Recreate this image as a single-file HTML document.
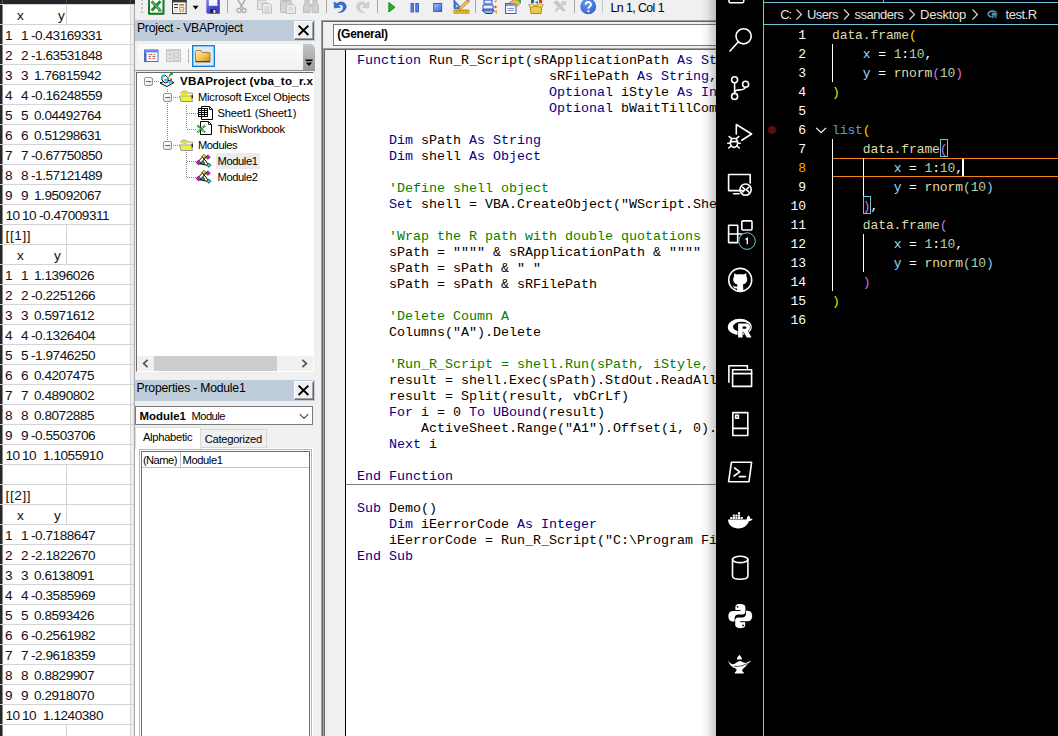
<!DOCTYPE html>
<html><head><meta charset="utf-8"><title>screen</title>
<style>
html,body{margin:0;padding:0;}
html{overflow:hidden;width:1058px;height:736px;}
body{width:1058px;height:736px;position:relative;overflow:hidden;background:#f0f0f0;font-family:"Liberation Sans",sans-serif;}
.abs{position:absolute;}
div,span{box-sizing:border-box;}
/* excel */
#xl{position:absolute;left:0;top:0;width:135px;height:736px;background:#fff;overflow:hidden;}
.hl{position:absolute;left:0;width:134px;height:1px;background:#d4d4d4;z-index:2;}
.vl{position:absolute;top:0;width:1px;background:#d4d4d4;}
.ct{position:absolute;font-size:13.6px;line-height:20px;height:20px;color:#111;white-space:pre;letter-spacing:-0.47px;}
/* vba */
.tah{font-family:"Liberation Sans",sans-serif;font-size:11px;color:#000;white-space:pre;}
.code{position:absolute;font-family:"Liberation Mono",monospace;font-size:13.333px;line-height:16px;height:16px;white-space:pre;color:#000;left:357px;}
.k{color:#00008b;}
.c{color:#008000;}
/* vscode */
#vs{position:absolute;left:716px;top:0;width:342px;height:736px;background:#000;overflow:hidden;}
.ln{position:absolute;left:0;width:90px;text-align:right;font-family:"Liberation Mono",monospace;font-size:13px;line-height:19px;height:19px;color:#fff;letter-spacing:-0.1px;}
.vc{position:absolute;left:116px;font-family:"Liberation Mono",monospace;font-size:13px;line-height:19px;height:19px;color:#fff;white-space:pre;letter-spacing:-0.1px;}
.f{color:#dcdcaa;}.v{color:#9cdcfe;}.n{color:#b5cea8;}.b1{color:#ffd700;}.b2{color:#da70d6;}.b3{color:#87cefa;}.kw{color:#569cd6;}
</style></head><body>

<div id="xl">
<div class="hl" style="top:4px"></div>
<div class="hl" style="top:24px"></div>
<div class="hl" style="top:44px"></div>
<div class="hl" style="top:64px"></div>
<div class="hl" style="top:84px"></div>
<div class="hl" style="top:104px"></div>
<div class="hl" style="top:124px"></div>
<div class="hl" style="top:144px"></div>
<div class="hl" style="top:164px"></div>
<div class="hl" style="top:184px"></div>
<div class="hl" style="top:204px"></div>
<div class="hl" style="top:224px"></div>
<div class="hl" style="top:244px"></div>
<div class="hl" style="top:264px"></div>
<div class="hl" style="top:284px"></div>
<div class="hl" style="top:304px"></div>
<div class="hl" style="top:324px"></div>
<div class="hl" style="top:344px"></div>
<div class="hl" style="top:364px"></div>
<div class="hl" style="top:384px"></div>
<div class="hl" style="top:404px"></div>
<div class="hl" style="top:424px"></div>
<div class="hl" style="top:444px"></div>
<div class="hl" style="top:464px"></div>
<div class="hl" style="top:484px"></div>
<div class="hl" style="top:504px"></div>
<div class="hl" style="top:524px"></div>
<div class="hl" style="top:544px"></div>
<div class="hl" style="top:564px"></div>
<div class="hl" style="top:584px"></div>
<div class="hl" style="top:604px"></div>
<div class="hl" style="top:624px"></div>
<div class="hl" style="top:644px"></div>
<div class="hl" style="top:664px"></div>
<div class="hl" style="top:684px"></div>
<div class="hl" style="top:704px"></div>
<div class="hl" style="top:724px"></div>
<div class="hl" style="top:744px"></div>
<div class="vl" style="left:66px;top:4px;height:20px"></div>
<div class="vl" style="left:66px;top:224px;height:40px"></div>
<div class="vl" style="left:66px;top:464px;height:60px"></div>
<div class="vl" style="left:66px;top:724px;height:12px"></div>
<div class="vl" style="left:130px;top:0;height:736px;background:#d4d4d4"></div>
<span class="ct" style="left:17px;top:6px;">x</span>
<span class="ct" style="left:58px;top:6px;">y</span>
<span class="ct" style="left:5px;top:26px;">1</span>
<span class="ct" style="left:21px;top:26px;">1</span>
<span class="ct" style="left:31px;top:26px;">-0.43169331</span>
<span class="ct" style="left:5px;top:46px;">2</span>
<span class="ct" style="left:21px;top:46px;">2</span>
<span class="ct" style="left:31px;top:46px;">-1.63531848</span>
<span class="ct" style="left:5px;top:66px;">3</span>
<span class="ct" style="left:21px;top:66px;">3</span>
<span class="ct" style="left:34px;top:66px;">1.76815942</span>
<span class="ct" style="left:5px;top:86px;">4</span>
<span class="ct" style="left:21px;top:86px;">4</span>
<span class="ct" style="left:31px;top:86px;">-0.16248559</span>
<span class="ct" style="left:5px;top:106px;">5</span>
<span class="ct" style="left:21px;top:106px;">5</span>
<span class="ct" style="left:34px;top:106px;">0.04492764</span>
<span class="ct" style="left:5px;top:126px;">6</span>
<span class="ct" style="left:21px;top:126px;">6</span>
<span class="ct" style="left:34px;top:126px;">0.51298631</span>
<span class="ct" style="left:5px;top:146px;">7</span>
<span class="ct" style="left:21px;top:146px;">7</span>
<span class="ct" style="left:31px;top:146px;">-0.67750850</span>
<span class="ct" style="left:5px;top:166px;">8</span>
<span class="ct" style="left:21px;top:166px;">8</span>
<span class="ct" style="left:31px;top:166px;">-1.57121489</span>
<span class="ct" style="left:5px;top:186px;">9</span>
<span class="ct" style="left:21px;top:186px;">9</span>
<span class="ct" style="left:34px;top:186px;">1.95092067</span>
<span class="ct" style="left:5.5px;top:206px;">10</span>
<span class="ct" style="left:22px;top:206px;">10</span>
<span class="ct" style="left:39px;top:206px;">-0.47009311</span>
<span class="ct" style="left:5.5px;top:226px;letter-spacing:0.6px">[[1]]</span>
<span class="ct" style="left:17px;top:246px;">x</span>
<span class="ct" style="left:54px;top:246px;">y</span>
<span class="ct" style="left:5px;top:266px;">1</span>
<span class="ct" style="left:21px;top:266px;">1</span>
<span class="ct" style="left:34px;top:266px;">1.1396026</span>
<span class="ct" style="left:5px;top:286px;">2</span>
<span class="ct" style="left:21px;top:286px;">2</span>
<span class="ct" style="left:31px;top:286px;">-0.2251266</span>
<span class="ct" style="left:5px;top:306px;">3</span>
<span class="ct" style="left:21px;top:306px;">3</span>
<span class="ct" style="left:34px;top:306px;">0.5971612</span>
<span class="ct" style="left:5px;top:326px;">4</span>
<span class="ct" style="left:21px;top:326px;">4</span>
<span class="ct" style="left:31px;top:326px;">-0.1326404</span>
<span class="ct" style="left:5px;top:346px;">5</span>
<span class="ct" style="left:21px;top:346px;">5</span>
<span class="ct" style="left:31px;top:346px;">-1.9746250</span>
<span class="ct" style="left:5px;top:366px;">6</span>
<span class="ct" style="left:21px;top:366px;">6</span>
<span class="ct" style="left:34px;top:366px;">0.4207475</span>
<span class="ct" style="left:5px;top:386px;">7</span>
<span class="ct" style="left:21px;top:386px;">7</span>
<span class="ct" style="left:34px;top:386px;">0.4890802</span>
<span class="ct" style="left:5px;top:406px;">8</span>
<span class="ct" style="left:21px;top:406px;">8</span>
<span class="ct" style="left:34px;top:406px;">0.8072885</span>
<span class="ct" style="left:5px;top:426px;">9</span>
<span class="ct" style="left:21px;top:426px;">9</span>
<span class="ct" style="left:31px;top:426px;">-0.5503706</span>
<span class="ct" style="left:5.5px;top:446px;">10</span>
<span class="ct" style="left:22px;top:446px;">10</span>
<span class="ct" style="left:43px;top:446px;">1.1055910</span>
<span class="ct" style="left:5.5px;top:486px;letter-spacing:0.6px">[[2]]</span>
<span class="ct" style="left:17px;top:506px;">x</span>
<span class="ct" style="left:54px;top:506px;">y</span>
<span class="ct" style="left:5px;top:526px;">1</span>
<span class="ct" style="left:21px;top:526px;">1</span>
<span class="ct" style="left:31px;top:526px;">-0.7188647</span>
<span class="ct" style="left:5px;top:546px;">2</span>
<span class="ct" style="left:21px;top:546px;">2</span>
<span class="ct" style="left:31px;top:546px;">-2.1822670</span>
<span class="ct" style="left:5px;top:566px;">3</span>
<span class="ct" style="left:21px;top:566px;">3</span>
<span class="ct" style="left:34px;top:566px;">0.6138091</span>
<span class="ct" style="left:5px;top:586px;">4</span>
<span class="ct" style="left:21px;top:586px;">4</span>
<span class="ct" style="left:31px;top:586px;">-0.3585969</span>
<span class="ct" style="left:5px;top:606px;">5</span>
<span class="ct" style="left:21px;top:606px;">5</span>
<span class="ct" style="left:34px;top:606px;">0.8593426</span>
<span class="ct" style="left:5px;top:626px;">6</span>
<span class="ct" style="left:21px;top:626px;">6</span>
<span class="ct" style="left:31px;top:626px;">-0.2561982</span>
<span class="ct" style="left:5px;top:646px;">7</span>
<span class="ct" style="left:21px;top:646px;">7</span>
<span class="ct" style="left:31px;top:646px;">-2.9618359</span>
<span class="ct" style="left:5px;top:666px;">8</span>
<span class="ct" style="left:21px;top:666px;">8</span>
<span class="ct" style="left:34px;top:666px;">0.8829907</span>
<span class="ct" style="left:5px;top:686px;">9</span>
<span class="ct" style="left:21px;top:686px;">9</span>
<span class="ct" style="left:34px;top:686px;">0.2918070</span>
<span class="ct" style="left:5.5px;top:706px;">10</span>
<span class="ct" style="left:22px;top:706px;">10</span>
<span class="ct" style="left:43px;top:706px;">1.1240380</span>
<div class="abs" style="left:131px;top:4px;width:3px;height:732px;background:linear-gradient(to right,#f6f6f6,#e4e4e4)"></div>
<div class="abs" style="left:134px;top:4px;width:1px;height:732px;background:#a8a8a8"></div>
<div class="abs" style="left:0;top:0;width:135px;height:4px;background:#262626"></div>
<div class="abs" style="left:130px;top:0;width:1px;height:4px;background:#4a4a4a"></div>
<div class="abs" style="left:0;top:0;width:3px;height:736px;background:linear-gradient(to right,#262626 0,#262626 2px,#8a8a8a 2px,#8a8a8a 3px)"></div>
<div class="abs" style="left:66px;top:0;width:1px;height:4px;background:#4a4a4a"></div>
<div class="abs" style="left:2px;top:0;width:1px;height:4px;background:#555"></div>
</div>
<div class="abs" style="left:135px;top:0;width:581px;height:20px;background:#f0f0f0"></div>
<div class="abs" style="left:135px;top:20px;width:180px;height:21px;background:#bfcddb"></div>
<span class="abs" style="left:137px;top:20px;font-family:'Liberation Sans';font-size:12.2px;line-height:17px;color:#000;white-space:pre;letter-spacing:-0.260px;">Project - VBAProject</span>
<div class="abs" style="left:294px;top:21px;width:20px;height:19px;background:#f0f0f0;border:1px solid;border-color:#fff #696969 #696969 #fff;box-shadow:inset -1px -1px 0 #a0a0a0"></div>
<svg class="abs" style="left:294px;top:21px" width="20" height="19"><path d="M4.6 4.6 L14.4 14 M14.4 4.6 L4.6 14" stroke="#000" stroke-width="2" fill="none"/></svg>
<div class="abs" style="left:137px;top:44px;width:178px;height:26px;background:linear-gradient(to bottom,#fbfbfb,#f1f1f1);border-radius:4px 5px 0 0"></div>
<div class="abs" style="left:135px;top:70px;width:180px;height:1px;background:#8c8c8c"></div>
<div class="abs" style="left:136px;top:72px;width:178px;height:300px;background:#fff;border:1px solid #696969;border-right-color:#fff;border-bottom-color:#fff"></div>
<span class="abs" style="left:180px;top:73px;font-family:'Liberation Sans';font-size:11.6px;line-height:16px;color:#000;white-space:pre;letter-spacing:0.223px;font-weight:bold;">VBAProject (vba_to_r.x</span>
<span class="abs" style="left:198px;top:89px;font-family:'Liberation Sans';font-size:11.2px;line-height:16px;color:#000;white-space:pre;letter-spacing:-0.227px;">Microsoft Excel Objects</span>
<span class="abs" style="left:217.5px;top:105px;font-family:'Liberation Sans';font-size:11.2px;line-height:16px;color:#000;white-space:pre;letter-spacing:-0.185px;">Sheet1 (Sheet1)</span>
<span class="abs" style="left:217.5px;top:121px;font-family:'Liberation Sans';font-size:11.2px;line-height:16px;color:#000;white-space:pre;letter-spacing:-0.340px;">ThisWorkbook</span>
<span class="abs" style="left:198px;top:137px;font-family:'Liberation Sans';font-size:11.2px;line-height:16px;color:#000;white-space:pre;letter-spacing:-0.462px;">Modules</span>
<div class="abs" style="left:216px;top:153px;width:44px;height:16px;background:#ebebeb"></div>
<span class="abs" style="left:217.5px;top:153px;font-family:'Liberation Sans';font-size:11.2px;line-height:16px;color:#000;white-space:pre;letter-spacing:-0.409px;">Module1</span>
<span class="abs" style="left:217.5px;top:169px;font-family:'Liberation Sans';font-size:11.2px;line-height:16px;color:#000;white-space:pre;letter-spacing:-0.409px;">Module2</span>
<div class="abs" style="left:137px;top:356px;width:176px;height:15px;background:#f0f0f0"></div>
<div class="abs" style="left:154px;top:356px;width:123px;height:15px;background:#cdcdcd"></div>
<svg class="abs" style="left:137px;top:355px" width="176" height="17"><path d="M10.6 4.8 L6.6 8.5 L10.6 12.2 M165.4 4.8 L169.4 8.5 L165.4 12.2" stroke="#5a5a5a" stroke-width="1.8" fill="none"/></svg>
<div class="abs" style="left:135px;top:380px;width:180px;height:21px;background:#bfcddb"></div>
<span class="abs" style="left:136.6px;top:380px;font-family:'Liberation Sans';font-size:12.2px;line-height:17px;color:#000;white-space:pre;letter-spacing:-0.212px;">Properties - Module1</span>
<div class="abs" style="left:294px;top:381px;width:20px;height:19px;background:#f0f0f0;border:1px solid;border-color:#fff #696969 #696969 #fff;box-shadow:inset -1px -1px 0 #a0a0a0"></div>
<svg class="abs" style="left:294px;top:381px" width="20" height="19"><path d="M4.6 4.6 L14.4 14 M14.4 4.6 L4.6 14" stroke="#000" stroke-width="2" fill="none"/></svg>
<div class="abs" style="left:135px;top:448px;width:178px;height:288px;background:#fff"></div>
<div class="abs" style="left:135px;top:406px;width:178px;height:19px;background:#fff;border:1px solid #7a7a7a"></div>
<span class="abs" style="left:139.5px;top:408px;font-family:'Liberation Sans';font-size:11.4px;line-height:16px;color:#000;white-space:pre;letter-spacing:0.038px;font-weight:bold;">Module1</span>
<span class="abs" style="left:191.4px;top:408px;font-family:'Liberation Sans';font-size:11.2px;line-height:16px;color:#000;white-space:pre;letter-spacing:-0.523px;">Module</span>
<svg class="abs" style="left:298px;top:411px" width="12" height="10"><path d="M1.8 3.2 L6 7.4 L10.2 3.2" stroke="#444" stroke-width="1.1" fill="none"/></svg>
<div class="abs" style="left:135px;top:427px;width:66px;height:22px;background:#fff;border:1px solid #dcdcdc;border-bottom:none"></div>
<div class="abs" style="left:200px;top:429px;width:67px;height:19px;background:#f0f0f0;border:1px solid #d9d9d9"></div>
<span class="abs" style="left:142.9px;top:429px;font-family:'Liberation Sans';font-size:11.2px;line-height:16px;color:#000;white-space:pre;letter-spacing:-0.280px;">Alphabetic</span>
<span class="abs" style="left:204.7px;top:431px;font-family:'Liberation Sans';font-size:11.2px;line-height:16px;color:#000;white-space:pre;letter-spacing:-0.281px;">Categorized</span>
<div class="abs" style="left:139px;top:449px;width:173px;height:290px;border:1px solid #b4b4b4;background:#fff"></div>
<div class="abs" style="left:141px;top:451px;width:169px;height:290px;border:1px solid #696969;background:#fff"></div>
<div class="abs" style="left:142px;top:467px;width:167px;height:1px;background:#c0c0c0"></div>
<div class="abs" style="left:180px;top:452px;width:1px;height:15px;background:#c0c0c0"></div>
<span class="abs" style="left:142.9px;top:452px;font-family:'Liberation Sans';font-size:11.2px;line-height:16px;color:#000;white-space:pre;letter-spacing:-0.556px;">(Name)</span>
<span class="abs" style="left:182.5px;top:452px;font-family:'Liberation Sans';font-size:11.2px;line-height:16px;color:#000;white-space:pre;letter-spacing:-0.409px;">Module1</span>
<div class="abs" style="left:313px;top:402px;width:8px;height:334px;background:#f0f0f0"></div>
<div class="abs" style="left:315px;top:20px;width:6px;height:716px;background:#f0f0f0"></div>
<div class="abs" style="left:321px;top:20px;width:395px;height:716px;background:#f0f0f0;border-left:1px solid #a0a0a0;border-top:1px solid #a0a0a0"></div>
<div class="abs" style="left:322px;top:21px;width:394px;height:715px;border-left:1px solid #696969;border-top:1px solid #696969"></div>
<div class="abs" style="left:333px;top:24px;width:390px;height:22px;background:#fff;border:1px solid #7a7a7a"></div>
<span class="abs" style="left:337.3px;top:27px;font-family:'Liberation Sans';font-size:12px;line-height:15px;color:#000;white-space:pre;letter-spacing:-0.243px;font-weight:bold;">(General)</span>
<div class="abs" style="left:323px;top:48px;width:393px;height:688px;background:#fff;border-left:1px solid #a0a0a0;border-top:1px solid #a0a0a0"></div>
<div class="abs" style="left:324px;top:49px;width:392px;height:687px;border-left:1px solid #696969;border-top:1px solid #696969"></div>
<div class="abs" style="left:325px;top:50px;width:20px;height:686px;background:#f0f0f0"></div>
<div class="abs" style="left:345px;top:50px;width:1px;height:686px;background:#000"></div>
<div class="abs" style="left:346px;top:484px;width:370px;height:1px;background:#808080"></div>
<div class="code" style="top:53px"><span class="k">Function</span> Run_R_Script(sRApplicationPath <span class="k">As</span> <span class="k">String</span>,</div>
<div class="code" style="top:69px">                        sRFilePath <span class="k">As</span> <span class="k">String</span>,</div>
<div class="code" style="top:85px">                        <span class="k">Optional</span> iStyle <span class="k">As</span> <span class="k">Integer</span> = 1,</div>
<div class="code" style="top:101px">                        <span class="k">Optional</span> bWaitTillComplete <span class="k">As</span> <span class="k">Boolean</span></div>
<div class="code" style="top:133px">    <span class="k">Dim</span> sPath <span class="k">As</span> <span class="k">String</span></div>
<div class="code" style="top:149px">    <span class="k">Dim</span> shell <span class="k">As</span> <span class="k">Object</span></div>
<div class="code" style="top:181px">    <span class="c">'Define shell object</span></div>
<div class="code" style="top:197px">    <span class="k">Set</span> shell = VBA.CreateObject("WScript.Shell")</div>
<div class="code" style="top:229px">    <span class="c">'Wrap the R path with double quotations</span></div>
<div class="code" style="top:245px">    sPath = """" &amp; sRApplicationPath &amp; """"</div>
<div class="code" style="top:261px">    sPath = sPath &amp; " "</div>
<div class="code" style="top:277px">    sPath = sPath &amp; sRFilePath</div>
<div class="code" style="top:309px">    <span class="c">'Delete Coumn A</span></div>
<div class="code" style="top:325px">    Columns("A").Delete</div>
<div class="code" style="top:357px">    <span class="c">'Run_R_Script = shell.Run(sPath, iStyle, bWaitTillComplete)</span></div>
<div class="code" style="top:373px">    result = shell.Exec(sPath).StdOut.ReadAll()</div>
<div class="code" style="top:389px">    result = Split(result, vbCrLf)</div>
<div class="code" style="top:405px">    <span class="k">For</span> i = 0 <span class="k">To</span> <span class="k">UBound</span>(result)</div>
<div class="code" style="top:421px">        ActiveSheet.Range("A1").Offset(i, 0).Value = result(i)</div>
<div class="code" style="top:437px">    <span class="k">Next</span> i</div>
<div class="code" style="top:469px"><span class="k">End Function</span></div>
<div class="code" style="top:501px"><span class="k">Sub</span> Demo()</div>
<div class="code" style="top:517px">    <span class="k">Dim</span> iEerrorCode <span class="k">As</span> <span class="k">Integer</span></div>
<div class="code" style="top:533px">    iEerrorCode = Run_R_Script("C:\Program Files\R\R-4.1.0\bin\Rscript.exe", _</div>
<div class="code" style="top:549px"><span class="k">End Sub</span></div>
<svg class="abs" style="left:140px;top:0px" width="4" height="14" viewBox="0 0 4 14"><g fill="#c2c2c2"><rect x="1" y="-1" width="2" height="2"/><rect x="1" y="3" width="2" height="2"/><rect x="1" y="7" width="2" height="2"/><rect x="1" y="11" width="2" height="2"/></g></svg>
<svg class="abs" style="left:148px;top:0px" width="17" height="15" viewBox="0 0 17 15"><rect x="0" y="-1" width="16.4" height="15.8" fill="#2a9a3a"/><rect x="1" y="-1" width="14.4" height="14.8" fill="none" stroke="#0a5a1a" stroke-width="2" stroke-dasharray="1 1"/><rect x="2" y="-1" width="12.4" height="13.6" fill="#fff"/><path d="M3.6 1.2 L12.4 10.6 M12.4 1.2 L3.6 10.6" stroke="#1a8a2a" stroke-width="2.8"/><path d="M3.6 1.2 L12.4 10.6" stroke="#cfe8cf" stroke-width="0.7"/><path d="M10 11 H14" stroke="#1a8a2a" stroke-width="1"/></svg>
<svg class="abs" style="left:172px;top:0px" width="15" height="15" viewBox="0 0 15 15"><rect x="0.5" y="-1" width="13.6" height="14.6" fill="#fff" stroke="#3a3a3a" stroke-width="1"/><rect x="0" y="-1" width="14.6" height="3.4" fill="#3a3a3a"/><rect x="1" y="9" width="5.4" height="3.6" fill="#e4e6ee"/><rect x="2" y="4" width="4" height="1.1" fill="#3a3a3a"/><rect x="2" y="7" width="4" height="1.1" fill="#3a3a3a"/><rect x="7.2" y="4" width="5" height="1.8" fill="#d88818"/><rect x="7.7" y="7.3" width="4" height="2.6" fill="#fff" stroke="#d88818" stroke-width="1"/><path d="M7.2 11.6 H9.2 M10.2 11.6 H12.2" stroke="#d88818" stroke-width="1"/></svg>
<svg class="abs" style="left:192px;top:5px" width="8" height="6" viewBox="0 0 8 6"><path d="M0.6 0.7 L6.6 0.7 L3.6 4.4 Z" fill="#000"/></svg>
<svg class="abs" style="left:206px;top:0px" width="15" height="15" viewBox="0 0 15 15"><defs><linearGradient id="svg1" x1="0" y1="0" x2="1" y2="1"><stop offset="0" stop-color="#8484e8"/><stop offset="0.5" stop-color="#4a4ad0"/><stop offset="1" stop-color="#3a3ab0"/></linearGradient></defs><path d="M0.3 -1 H13.8 V13.8 H1.6 L0.3 12.6 Z" fill="url(#svg1)"/><rect x="2.8" y="-1" width="8.6" height="7" fill="#f4f6ff"/><path d="M2.8 5 H11.4 V6 H2.8 Z" fill="#c8d0f0"/><rect x="4.4" y="9.4" width="5.8" height="3.8" fill="#1a1a3a"/><rect x="7.4" y="10" width="2" height="3" fill="#e8e8ff"/></svg>
<div class="abs" style="left:227px;top:0;width:1px;height:13px;background:#a8a8a8"></div>
<div class="abs" style="left:326px;top:0;width:1px;height:13px;background:#a8a8a8"></div>
<div class="abs" style="left:377px;top:0;width:1px;height:13px;background:#a8a8a8"></div>
<div class="abs" style="left:475px;top:0;width:1px;height:13px;background:#a8a8a8"></div>
<div class="abs" style="left:574px;top:0;width:1px;height:13px;background:#a8a8a8"></div>
<div class="abs" style="left:602px;top:0;width:1px;height:13px;background:#c8c8c8"></div>
<svg class="abs" style="left:236px;top:0px" width="11" height="14" viewBox="0 0 11 14"><path d="M2 0 L7 8 M9 0 L4 8" stroke="#b0b0b0" stroke-width="1.6" fill="none"/><circle cx="3" cy="10.5" r="2" fill="none" stroke="#b0b0b0" stroke-width="1.4"/><circle cx="8" cy="10.5" r="2" fill="none" stroke="#b0b0b0" stroke-width="1.4"/></svg>
<svg class="abs" style="left:257px;top:0px" width="16" height="14" viewBox="0 0 16 14"><path d="M0.5 0 H7.5 L9.5 2 V9.5 H0.5 Z" fill="#e4e4e4" stroke="#c0c0c0"/><path d="M5.5 3.5 H12.5 L14.5 5.5 V13 H5.5 Z" fill="#ececec" stroke="#bcbcbc"/><path d="M7.5 7 H12.5 M7.5 9 H12.5 M7.5 11 H12.5" stroke="#c8c8c8"/></svg>
<svg class="abs" style="left:280px;top:0px" width="17" height="14" viewBox="0 0 17 14"><rect x="0.5" y="0.5" width="11" height="12" rx="1" fill="#d4d4d4" stroke="#bcbcbc"/><rect x="3.5" y="0" width="5" height="2.5" fill="#c0c0c0"/><path d="M6.5 4.5 H13.5 L15.5 6.5 V13.5 H6.5 Z" fill="#ececec" stroke="#c0c0c0"/><path d="M8.5 8 H13 M8.5 10 H13" stroke="#c8c8c8"/></svg>
<svg class="abs" style="left:303px;top:0px" width="16" height="14" viewBox="0 0 16 14"><path d="M2 0 H6 V3 L7 5 V12.5 H0.5 V6 L2 3 Z" fill="#cfcfcf" stroke="#bdbdbd"/><path d="M10 0 H14 V3 L15.5 6 V12.5 H9 V5 L10 3 Z" fill="#cfcfcf" stroke="#bdbdbd"/><rect x="6" y="4" width="4" height="3" fill="#c4c4c4"/></svg>
<svg class="abs" style="left:333px;top:0px" width="15" height="14" viewBox="0 0 15 14"><path d="M1 2 L1.5 8 L7.5 7.2 L5.2 5.2 C8 3.5 10.8 5 10.2 8.2 C9.8 10.4 8 11.8 5.5 12.6 C10 12.6 13.2 10 13.2 6.4 C13 2.2 8 0.4 3.6 3.6 Z" fill="#2f6fe0" stroke="#2055b8" stroke-width="0.6"/></svg>
<svg class="abs" style="left:355px;top:0px" width="15" height="14" viewBox="0 0 15 14"><path d="M14 2 L13.5 8 L7.5 7.2 L9.8 5.2 C7 3.5 4.2 5 4.8 8.2 C5.2 10.4 7 11.8 9.5 12.6 C5 12.6 1.8 10 1.8 6.4 C2 2.2 7 0.4 11.4 3.6 Z" fill="#d0d0d0" stroke="#bdbdbd" stroke-width="0.6"/></svg>
<svg class="abs" style="left:388px;top:2px" width="8" height="11" viewBox="0 0 8 11"><path d="M0.8 0.5 L7 5.3 L0.8 10 Z" fill="#22b022" stroke="#0a7a0a" stroke-width="0.8"/></svg>
<svg class="abs" style="left:410px;top:3px" width="10" height="10" viewBox="0 0 10 10"><rect x="1" y="0.5" width="2.6" height="8.5" fill="#5a82e8" stroke="#2a4fc0" stroke-width="0.8"/><rect x="5.8" y="0.5" width="2.6" height="8.5" fill="#5a82e8" stroke="#2a4fc0" stroke-width="0.8"/></svg>
<svg class="abs" style="left:433px;top:3px" width="10" height="10" viewBox="0 0 10 10"><defs><linearGradient id="sg" x1="0" y1="0" x2="1" y2="1"><stop offset="0" stop-color="#a8c0f8"/><stop offset="1" stop-color="#3a62d8"/></linearGradient></defs><rect x="0.7" y="0.5" width="8" height="8" fill="url(#sg)" stroke="#2a4fc0" stroke-width="0.9"/></svg>
<svg class="abs" style="left:453px;top:0px" width="17" height="14" viewBox="0 0 17 14"><path d="M1 0 L1 8.5 L8.5 8.5 Z" fill="#4a7ae0" stroke="#2a55c0" stroke-width="0.8"/><path d="M3 4.5 L3 7 L5.3 7 Z" fill="#cfe0ff"/><path d="M6.5 7.5 L14 0 L16 1.8 L8.5 9 L6 9.8 Z" fill="#f0c060" stroke="#a87818" stroke-width="0.7"/><path d="M13 0 L15 -1 L17 1 L16 2.6 Z" fill="#e07070"/><rect x="1" y="10" width="15" height="3.2" fill="#f0c030" stroke="#b08010" stroke-width="0.8"/><path d="M4 10 V12 M7 10 V12 M10 10 V12 M13 10 V12" stroke="#8a6008" stroke-width="0.6"/></svg>
<svg class="abs" style="left:481px;top:0px" width="18" height="15" viewBox="0 0 18 15"><path d="M3 0 H11 V4 H3 Z" fill="#d8e4ff" stroke="#2a55c0" stroke-width="1"/><path d="M2 5 L12 5 L12 9 L2 9 Z" fill="#e8eeff" stroke="#2a55c0" stroke-width="1"/><path d="M1 10 L13 10 L11 13.5 L5 13.5 Z" fill="#9ab0e8" stroke="#1a3a90" stroke-width="1"/><path d="M13 1 L16 0 L15 3 Z M13 11 L16 10 L16 14 Z" fill="#f0a020"/><path d="M13.5 5.5 L16.5 7 L13.5 8.5 Z" fill="#e04020"/></svg>
<svg class="abs" style="left:505px;top:0px" width="16" height="14" viewBox="0 0 16 14"><rect x="0.5" y="3.5" width="10.5" height="10" fill="#f4f7ff" stroke="#3a5fc0" stroke-width="1"/><rect x="1" y="4" width="9.5" height="2" fill="#7a9ae8"/><path d="M2.5 8.5 H9 M2.5 10.5 H9" stroke="#7a8ac0" stroke-width="0.9"/><path d="M4 3 L9 -0.5 L14 1 L15.5 3 L12 6.5 L11 4 Z" fill="#e8c050" stroke="#a88020" stroke-width="0.7"/><path d="M13 0 L16 0 L16 4 Z" fill="#40a060"/></svg>
<svg class="abs" style="left:528px;top:0px" width="17" height="14" viewBox="0 0 17 14"><path d="M2 6 L14 6 L13 13.5 L3 13.5 Z" fill="#f0c848" stroke="#a88018" stroke-width="0.9"/><path d="M0.5 5 L4 3.5 L8 6 L12 3.5 L15.5 5 L13 7.5 L8 6 L3 7.5 Z" fill="#f8dc78" stroke="#a88018" stroke-width="0.7"/><rect x="3" y="0" width="3" height="3" fill="#3050d0"/><rect x="11" y="0" width="3" height="3" fill="#e03020"/><path d="M7 2.5 L10 0.5 L10 4.5 Z" fill="#30a040"/></svg>
<svg class="abs" style="left:552px;top:0px" width="16" height="14" viewBox="0 0 16 14"><path d="M2 2 L5 1 L13 10 L11.5 11.5 L3.5 4 Z" fill="#c8c8c8" stroke="#b4b4b4" stroke-width="0.6"/><path d="M14 2 L11 1 L9.5 3 L3 10 L4.5 11.5 L11 5 L13.5 4.5 Z" fill="#d4d4d4" stroke="#b4b4b4" stroke-width="0.6"/></svg>
<svg class="abs" style="left:580px;top:0px" width="17" height="16" viewBox="0 0 17 16"><defs><radialGradient id="hg" cx="0.4" cy="0.3" r="0.8"><stop offset="0" stop-color="#6a9af0"/><stop offset="1" stop-color="#2a5acc"/></radialGradient></defs><circle cx="8.2" cy="6.4" r="7.9" fill="url(#hg)"/><path d="M5.6 4.6 C5.6 1.2 11 1.2 11 4.5 C11 6.6 8.4 6.6 8.4 8.8" stroke="#fff" stroke-width="1.9" fill="none"/><rect x="7.4" y="10.2" width="2" height="2" fill="#fff"/></svg>
<span class="abs" style="left:610.4px;top:1px;font-family:'Liberation Sans';font-size:12.4px;line-height:15px;color:#000;white-space:pre;letter-spacing:-0.579px;">Ln 1, Col 1</span>
<svg class="abs" style="left:144px;top:49px" width="15" height="14" viewBox="0 0 15 14"><rect x="0.5" y="1" width="13.5" height="11.5" fill="#fff" stroke="#4a6ac8" stroke-width="1"/><rect x="0.5" y="1" width="13.5" height="2.5" fill="#6a8ae0"/><rect x="0.5" y="3.5" width="2" height="9" fill="#4a6ac8"/><path d="M4.5 5.5 H8 M4.5 9.5 H7" stroke="#f06030" stroke-width="1"/><path d="M9.5 5.5 H11.5 M8.5 9.5 H11.5" stroke="#f06030" stroke-width="1"/><path d="M4.5 7.5 H7 M8.5 7.5 H11.5" stroke="#6a7ab0" stroke-width="1"/></svg>
<svg class="abs" style="left:166px;top:49px" width="16" height="14" viewBox="0 0 16 14"><rect x="0.5" y="0.5" width="14" height="12" fill="#e0e0e0" stroke="#c4c4c4" stroke-width="1"/><rect x="0.5" y="0.5" width="14" height="2" fill="#cfcfcf"/><rect x="7.5" y="4.5" width="5" height="2.5" fill="#ececec" stroke="#c0c0c0" stroke-width="0.8"/><rect x="7.5" y="8.5" width="5" height="2.5" fill="#ececec" stroke="#c0c0c0" stroke-width="0.8"/><path d="M2.5 5.5 H5.5 M2.5 9.5 H5.5" stroke="#c0c0c0" stroke-width="1"/></svg>
<div class="abs" style="left:188px;top:49px;width:1px;height:14px;background:#b4b4b4"></div>
<div class="abs" style="left:192px;top:45px;width:23px;height:22px;background:#dfe9f3;border:1px solid #1080e0;box-shadow:inset 0 0 0 0.5px #4a9ae8"></div>
<svg class="abs" style="left:195px;top:49px" width="16" height="14" viewBox="0 0 16 14"><defs><linearGradient id="fg" x1="0" y1="0" x2="1" y2="1"><stop offset="0" stop-color="#fff0b0"/><stop offset="0.6" stop-color="#f0c048"/><stop offset="1" stop-color="#c88a10"/></linearGradient></defs><path d="M0.5 2.5 Q0.5 1.5 1.5 1.5 H6 L7.5 3.5 H14 Q15 3.5 15 4.5 V12.5 H0.5 Z" fill="url(#fg)" stroke="#8a6a30" stroke-width="0.8"/><path d="M0.5 12.8 H15" stroke="#3a2a10" stroke-width="1"/></svg>
<div class="abs" style="left:303px;top:44px;width:12px;height:26px;border-radius:0 5px 0 0;background:linear-gradient(to bottom,#c4c4c4,#9a9a9a)"></div>
<svg class="abs" style="left:305px;top:59px" width="8" height="8" viewBox="0 0 8 8"><rect x="0.5" y="0.5" width="7" height="1.6" fill="#000"/><path d="M0.8 3.6 H7.2 L4 7 Z" fill="#000"/><path d="M1.5 4.4 H8 L4.8 7.8" fill="#fff" opacity="0.0"/></svg>
<div class="abs" style="left:144px;top:77px;width:9px;height:9px;border:1px solid #919191;border-radius:2px;background:linear-gradient(135deg,#fff 30%,#d8d8d8)"></div>
<div class="abs" style="left:146px;top:81px;width:5px;height:1px;background:#4b63a7"></div>
<div class="abs" style="left:154px;top:81px;width:5px;height:1px;background:repeating-linear-gradient(to right,#8a8a8a 0,#8a8a8a 1px,transparent 1px,transparent 2px)"></div>
<div class="abs" style="left:163px;top:93px;width:9px;height:9px;border:1px solid #919191;border-radius:2px;background:linear-gradient(135deg,#fff 30%,#d8d8d8)"></div>
<div class="abs" style="left:165px;top:97px;width:5px;height:1px;background:#4b63a7"></div>
<div class="abs" style="left:173px;top:97px;width:6px;height:1px;background:repeating-linear-gradient(to right,#8a8a8a 0,#8a8a8a 1px,transparent 1px,transparent 2px)"></div>
<div class="abs" style="left:163px;top:141px;width:9px;height:9px;border:1px solid #919191;border-radius:2px;background:linear-gradient(135deg,#fff 30%,#d8d8d8)"></div>
<div class="abs" style="left:165px;top:145px;width:5px;height:1px;background:#4b63a7"></div>
<div class="abs" style="left:173px;top:145px;width:6px;height:1px;background:repeating-linear-gradient(to right,#8a8a8a 0,#8a8a8a 1px,transparent 1px,transparent 2px)"></div>
<div class="abs" style="left:167px;top:89px;width:1px;height:4px;background:repeating-linear-gradient(to bottom,#8a8a8a 0,#8a8a8a 1px,transparent 1px,transparent 2px)"></div>
<div class="abs" style="left:167px;top:103px;width:1px;height:38px;background:repeating-linear-gradient(to bottom,#8a8a8a 0,#8a8a8a 1px,transparent 1px,transparent 2px)"></div>
<div class="abs" style="left:186px;top:105px;width:1px;height:24px;background:repeating-linear-gradient(to bottom,#8a8a8a 0,#8a8a8a 1px,transparent 1px,transparent 2px)"></div>
<div class="abs" style="left:187px;top:113px;width:11px;height:1px;background:repeating-linear-gradient(to right,#8a8a8a 0,#8a8a8a 1px,transparent 1px,transparent 2px)"></div>
<div class="abs" style="left:187px;top:129px;width:10px;height:1px;background:repeating-linear-gradient(to right,#8a8a8a 0,#8a8a8a 1px,transparent 1px,transparent 2px)"></div>
<div class="abs" style="left:186px;top:152px;width:1px;height:25px;background:repeating-linear-gradient(to bottom,#8a8a8a 0,#8a8a8a 1px,transparent 1px,transparent 2px)"></div>
<div class="abs" style="left:187px;top:161px;width:10px;height:1px;background:repeating-linear-gradient(to right,#8a8a8a 0,#8a8a8a 1px,transparent 1px,transparent 2px)"></div>
<div class="abs" style="left:187px;top:177px;width:10px;height:1px;background:repeating-linear-gradient(to right,#8a8a8a 0,#8a8a8a 1px,transparent 1px,transparent 2px)"></div>
<svg class="abs" style="left:159px;top:73px" width="16" height="15" viewBox="0 0 16 15"><path d="M1 10 L8 13.5 L15 9.5 L9 7 Z" fill="#fff" stroke="#000" stroke-width="1"/><path d="M3 3 L6 2 L9 5 L9 9 L6 10 L3 7 Z" fill="#fff" stroke="#000" stroke-width="0.9"/><path d="M2.5 2 L5.5 1.5 L6 4 L3.5 4.5 Z" fill="#00d8e8"/><path d="M5 6 L8 5.5 L8 8 L5.5 8.5 Z" fill="#30c8e0"/><path d="M9 9.5 L13 8 L13.5 9.5 L10 11 Z" fill="#00d8e8"/><path d="M10 5 L11.5 0.5" stroke="#000" stroke-width="1"/><rect x="11" y="0" width="3" height="2" fill="#00c020"/><rect x="8.5" y="3" width="2.5" height="2" fill="#e8d000"/><rect x="11" y="5.5" width="2" height="2.5" fill="#e020d0"/></svg>
<svg class="abs" style="left:179px;top:90px" width="15" height="13" viewBox="0 0 15 13"><path d="M1.5 4 L3 1.2 L7.5 1.2 L9 3 L13.5 3 L13.5 5" fill="#f4f0c0" stroke="#9a9a9a" stroke-width="0.9"/><rect x="3" y="2.2" width="5" height="2.8" fill="#e8e020"/><path d="M0.5 6 L12 6 L13.5 11.5 L2 11.5 Z" fill="#ecec50" stroke="#8a8a8a" stroke-width="0.9"/><path d="M1.5 6.5 L11.5 6.5 L12.6 11 L2.6 11 Z" fill="#f0f040" opacity="0.8"/><path d="M12 5.5 L14 5 L14 9.5 Z" fill="#222"/></svg>
<svg class="abs" style="left:179px;top:139px" width="15" height="13" viewBox="0 0 15 13"><path d="M1.5 4 L3 1.2 L7.5 1.2 L9 3 L13.5 3 L13.5 5" fill="#f4f0c0" stroke="#9a9a9a" stroke-width="0.9"/><rect x="3" y="2.2" width="5" height="2.8" fill="#e8e020"/><path d="M0.5 6 L12 6 L13.5 11.5 L2 11.5 Z" fill="#ecec50" stroke="#8a8a8a" stroke-width="0.9"/><path d="M1.5 6.5 L11.5 6.5 L12.6 11 L2.6 11 Z" fill="#f0f040" opacity="0.8"/><path d="M12 5.5 L14 5 L14 9.5 Z" fill="#222"/></svg>
<svg class="abs" style="left:198px;top:106px" width="16" height="15" viewBox="0 0 16 15"><path d="M3.5 0.5 H11.5 L14.5 3.5 V13.5 H3.5 Z" fill="#fff" stroke="#000" stroke-width="1"/><path d="M11.5 0.5 V3.5 H14.5" fill="none" stroke="#000" stroke-width="0.8"/><rect x="0.5" y="2.5" width="9" height="8" fill="#fff" stroke="#000" stroke-width="1"/><path d="M0.5 4.5 H9.5 M0.5 6.5 H9.5 M0.5 8.5 H9.5 M3.5 2.5 V10.5 M6.5 2.5 V10.5" stroke="#000" stroke-width="1"/></svg>
<svg class="abs" style="left:197px;top:121px" width="17" height="15" viewBox="0 0 17 15"><path d="M3.5 0.5 H11.5 L14.5 3.5 V13.5 H3.5 Z" fill="#fff" stroke="#000" stroke-width="1"/><path d="M11.5 0.5 V3.5 H14.5" fill="none" stroke="#000" stroke-width="0.8"/><path d="M0.5 4.5 L8 11.5 M8 4.5 L0.5 11.5" stroke="#2a8a2a" stroke-width="2.4" stroke-dasharray="1.2 0.6"/></svg>
<svg class="abs" style="left:196px;top:154px" width="17" height="14" viewBox="0 0 17 14"><path d="M1.5 8 L8 1.5 M2.5 9.5 L13 11.5 M6 2.5 L13 11 M11.5 1.5 L4 10" stroke="#000" stroke-width="1"/><rect x="6.5" y="1" width="3" height="3" fill="#e8d800" stroke="#000" stroke-width="0.5" transform="rotate(45 8 2.5)"/><rect x="10.5" y="1.5" width="3.2" height="3.2" fill="#d818d0" stroke="#000" stroke-width="0.5" transform="rotate(45 12 3)"/><rect x="0.8" y="6.8" width="3.4" height="3.4" fill="#d818d0" stroke="#000" stroke-width="0.5" transform="rotate(45 2.5 8.5)"/><rect x="5.4" y="7.6" width="3" height="3" fill="#10b020" stroke="#000" stroke-width="0.5" transform="rotate(45 7 9)"/><rect x="11.2" y="9.6" width="3.2" height="3.2" fill="#10c8d8" stroke="#000" stroke-width="0.5" transform="rotate(45 12.8 11.2)"/></svg>
<svg class="abs" style="left:196px;top:170px" width="17" height="14" viewBox="0 0 17 14"><path d="M1.5 8 L8 1.5 M2.5 9.5 L13 11.5 M6 2.5 L13 11 M11.5 1.5 L4 10" stroke="#000" stroke-width="1"/><rect x="6.5" y="1" width="3" height="3" fill="#e8d800" stroke="#000" stroke-width="0.5" transform="rotate(45 8 2.5)"/><rect x="10.5" y="1.5" width="3.2" height="3.2" fill="#d818d0" stroke="#000" stroke-width="0.5" transform="rotate(45 12 3)"/><rect x="0.8" y="6.8" width="3.4" height="3.4" fill="#d818d0" stroke="#000" stroke-width="0.5" transform="rotate(45 2.5 8.5)"/><rect x="5.4" y="7.6" width="3" height="3" fill="#10b020" stroke="#000" stroke-width="0.5" transform="rotate(45 7 9)"/><rect x="11.2" y="9.6" width="3.2" height="3.2" fill="#10c8d8" stroke="#000" stroke-width="0.5" transform="rotate(45 12.8 11.2)"/></svg>
<div class="abs" style="left:700px;top:0;width:16px;height:736px;background:linear-gradient(to right,rgba(0,0,0,0),rgba(0,0,0,0.04) 40%,rgba(0,0,0,0.22))"></div>
<div id="vs">
<svg class="abs" style="left:0;top:0" width="47" height="736" viewBox="0 0 47 736"><path d="M13 -6 V1.5 Q13 2.8 14.3 2.8 H26.4 Q27.7 2.8 27.7 1.5 V-6" stroke="#fff" fill="none" stroke-width="1.6" stroke-linejoin="round" stroke-linecap="round" stroke-linecap="butt"/><circle cx="27.6" cy="36.3" r="7.6" stroke="#fff" fill="none" stroke-width="1.6" stroke-linejoin="round" stroke-linecap="round"/><path d="M22.2 42 L14 51" stroke="#fff" fill="none" stroke-width="1.6" stroke-linejoin="round" stroke-linecap="round" stroke-linecap="butt"/><circle cx="18.6" cy="79.7" r="3" stroke="#fff" fill="none" stroke-width="1.6" stroke-linejoin="round" stroke-linecap="round"/><circle cx="29.6" cy="84.2" r="3" stroke="#fff" fill="none" stroke-width="1.6" stroke-linejoin="round" stroke-linecap="round"/><circle cx="18.6" cy="96.4" r="3" stroke="#fff" fill="none" stroke-width="1.6" stroke-linejoin="round" stroke-linecap="round"/><path d="M18.6 82.7 V93.4 M29.3 87.2 C29 90.5 24 89.5 20.5 90.3 C19.2 90.7 18.8 91.5 18.6 93" stroke="#fff" fill="none" stroke-width="1.6" stroke-linejoin="round" stroke-linecap="round"/><path d="M20.3 134 V124.5 L35.6 134 L25.8 140.2" stroke="#fff" fill="none" stroke-width="1.6" stroke-linejoin="round" stroke-linecap="round"/><ellipse cx="18" cy="142.8" rx="3.6" ry="4.6" stroke="#fff" fill="none" stroke-width="1.6" stroke-linejoin="round" stroke-linecap="round"/><path d="M14.4 141.6 H21.6 M15.5 138.4 L13.2 136.6 M20.5 138.4 L22.8 136.6 M14.2 143.2 H11.8 M21.8 143.2 H24.2 M15 146 L12.8 148 M21 146 L23.2 148" stroke="#fff" fill="none" stroke-width="1.6" stroke-linejoin="round" stroke-linecap="round" stroke-width="1.3"/><path d="M27 190.6 H12.6 V174.5 H34.2 V183" stroke="#fff" fill="none" stroke-width="1.6" stroke-linejoin="round" stroke-linecap="round"/><path d="M17.5 193.7 H23" stroke="#fff" fill="none" stroke-width="1.6" stroke-linejoin="round" stroke-linecap="round"/><circle cx="29.6" cy="189.6" r="5.6" stroke="#fff" fill="none" stroke-width="1.6" stroke-linejoin="round" stroke-linecap="round" stroke-width="1.4"/><path d="M26.8 187.3 L29 189.6 L26.8 191.9 M32.6 187.3 L30.4 189.6 L32.6 191.9" stroke="#fff" fill="none" stroke-width="1.6" stroke-linejoin="round" stroke-linecap="round" stroke-width="1.1"/><path d="M12.6 225.2 H21.7 V242.6 H12.6 Z M12.6 234 H21.7 M21.7 234 H26" stroke="#fff" fill="none" stroke-width="1.6" stroke-linejoin="round" stroke-linecap="round"/><rect x="25.8" y="220.9" width="10.2" height="9.1" rx="1.2" stroke="#fff" fill="none" stroke-width="1.6" stroke-linejoin="round" stroke-linecap="round"/><circle cx="31" cy="241.1" r="8.3" fill="#000" stroke="#6fc3df" stroke-width="1"/><path d="M29.6 239.6 L31.3 238.4 V244.2" stroke="#fff" stroke-width="1.4" fill="none"/><circle cx="24.2" cy="279.9" r="11.5" stroke="#fff" fill="none" stroke-width="1.6" stroke-linejoin="round" stroke-linecap="round" stroke-width="1.4"/><path d="M18.2 273.2 L20.8 274.6 C23 274 25.4 274 27.6 274.6 L30.2 273.2 L30.4 276.6 C32.4 280 30.6 283.8 27 284.6 L27.4 291 H21.2 V288.4 C19 288.9 18 287.8 17.2 286.4 L16.4 285.6 C18 285.6 18.6 287.2 21.2 286.8 L21.4 284.6 C17.8 283.8 16 280 18 276.6 Z" fill="#fff"/><path d="M11.8 327 A12 8.2 0 1 0 35.8 327 A12 8.2 0 1 0 11.8 327 Z M17 326.8 A8.6 5 0 1 1 34.2 326.8 A8.6 5 0 1 1 17 326.8 Z" fill="#fff" fill-rule="evenodd"/><path d="M22.1 323.6 H30.6 C34.8 323.6 35 329.8 31.8 330.8 L35.6 337.6 H30.8 L27.6 331.8 H26.6 V337.6 H22.1 Z M26.6 326.4 V328.8 H29.4 C30.8 328.8 30.8 326.4 29.4 326.4 Z" fill="#fff" stroke="#000" stroke-width="1" fill-rule="evenodd" paint-order="stroke"/><path d="M12.9 382.2 V365.8 H31.4 V368.2" stroke="#fff" fill="none" stroke-width="1.6" stroke-linejoin="round" stroke-linecap="round" stroke-linecap="butt" stroke-linejoin="miter"/><rect x="16.6" y="369.8" width="19" height="16.6" stroke="#fff" fill="none" stroke-width="1.6" stroke-linejoin="round" stroke-linecap="round" stroke-linejoin="miter"/><path d="M16.6 373.6 H35.6" stroke="#fff" fill="none" stroke-width="1.6" stroke-linejoin="round" stroke-linecap="round"/><rect x="16.8" y="412.6" width="15" height="22.9" stroke="#fff" fill="none" stroke-width="1.6" stroke-linejoin="round" stroke-linecap="round" stroke-linejoin="miter"/><path d="M16.8 428.4 H31.8" stroke="#fff" fill="none" stroke-width="1.6" stroke-linejoin="round" stroke-linecap="round"/><rect x="19.6" y="415.4" width="2.8" height="2.8" stroke="#fff" fill="none" stroke-width="1.6" stroke-linejoin="round" stroke-linecap="round" stroke-width="1"/><path d="M15.4 462.3 H35.6 L33 481.7 H12.6 Z" stroke="#fff" fill="none" stroke-width="1.6" stroke-linejoin="round" stroke-linecap="round"/><path d="M18.6 468 L23.8 471.8 L18 476 M23.4 476.6 H29.4" stroke="#fff" fill="none" stroke-width="1.6" stroke-linejoin="round" stroke-linecap="round" stroke-width="1.6"/><path d="M12 519.6 H30.6 C30.8 517.6 31.4 516.4 32.6 515.4 C33.8 516.4 34.4 517.8 34.2 519 C35.4 518.6 36.4 518.8 36.6 519 C36 520.6 34.4 521 33 521 C31.4 525.6 27.6 528.4 22.4 528.4 C16.4 528.4 12.2 525.4 12 519.6 Z" fill="#fff"/><rect x="14.2" y="517" width="2.1" height="2.1" fill="#fff"/><rect x="16.8" y="517" width="2.1" height="2.1" fill="#fff"/><rect x="19.4" y="517" width="2.1" height="2.1" fill="#fff"/><rect x="22" y="517" width="2.1" height="2.1" fill="#fff"/><rect x="24.6" y="517" width="2.1" height="2.1" fill="#fff"/><rect x="16.8" y="514.6" width="2.1" height="2.1" fill="#fff"/><rect x="19.4" y="514.6" width="2.1" height="2.1" fill="#fff"/><rect x="22" y="514.6" width="2.1" height="2.1" fill="#fff"/><rect x="22" y="512.2" width="2.1" height="2.1" fill="#fff"/><ellipse cx="24.2" cy="559.4" rx="7.7" ry="3.2" stroke="#fff" fill="none" stroke-width="1.6" stroke-linejoin="round" stroke-linecap="round"/><path d="M16.5 559.4 V576 C16.5 580.4 31.9 580.4 31.9 576 V559.4" stroke="#fff" fill="none" stroke-width="1.6" stroke-linejoin="round" stroke-linecap="round"/><path d="M24 604 C19.6 604 19.4 606 19.4 607.4 V610 H24.4 V611 H16.8 C13.4 611 12.4 614 12.4 616.2 C12.4 618.6 13.4 621.4 16.8 621.4 H18.6 V618.4 C18.6 616.2 20.2 614.6 22.4 614.6 H26.6 C28.4 614.6 29.4 613.4 29.4 611.6 V607.4 C29.4 605 27.4 604 24 604 Z" fill="#fff"/><circle cx="21.6" cy="606.8" r="0.9" fill="#000"/><path d="M24.6 628.2 C29 628.2 29.2 626.2 29.2 624.8 V622.2 H24.2 V621.2 H31.8 C35.2 621.2 36.2 618.2 36.2 616 C36.2 613.6 35.2 610.8 31.8 610.8 H30 V613.8 C30 616 28.4 617.6 26.2 617.6 H22 C20.2 617.6 19.2 618.8 19.2 620.6 V624.8 C19.2 627.2 21.2 628.2 24.6 628.2 Z" fill="#fff"/><circle cx="27" cy="625.4" r="0.9" fill="#000"/><path d="M23.4 654.8 C24.6 656.4 26.2 657.6 25.8 659.6 H21 C20.6 657.6 22.2 656.4 23.4 654.8 Z" fill="#fff"/><path d="M12 659.8 C12.6 662.4 14.6 663.8 17 664.2 C19.6 664.2 21 661.4 23.4 661 C26 661 27.4 663.4 30 662.8 C32 662.2 33.4 660.8 35.4 661 C32 662.4 30.8 666 27.4 668.4 C25.6 669.6 25.6 671 27.8 672.4 V673.6 H18.8 V672.4 C21 671 21.2 669.6 19.4 668.6 C15.4 666.6 12.4 664 12 659.8 Z" fill="#fff"/><path d="M18.2 666.2 C22 667 27 666 31.8 663.2" stroke="#000" stroke-width="0.7" fill="none"/></svg>
<div class="abs" style="left:47px;top:0;width:1px;height:736px;background:#6fc3df"></div>
<div class="abs" style="left:48px;top:24px;width:294px;height:1px;background:#6fc3df"></div>
<div class="abs" style="left:48px;top:2px;width:294px;height:1px;background:#6fc3df"></div>
<div class="abs" style="left:167px;top:0;width:1px;height:2px;background:#6fc3df"></div>
<span class="abs" style="left:64.20000000000005px;top:6px;font-family:'Liberation Sans';font-size:13px;line-height:17px;color:#e4e4e4;white-space:pre;letter-spacing:-1.000px;">C:</span>
<span class="abs" style="left:91px;top:6px;font-family:'Liberation Sans';font-size:13px;line-height:17px;color:#e4e4e4;white-space:pre;letter-spacing:-0.590px;">Users</span>
<span class="abs" style="left:138.60000000000002px;top:6px;font-family:'Liberation Sans';font-size:13px;line-height:17px;color:#e4e4e4;white-space:pre;letter-spacing:-0.519px;">ssanders</span>
<span class="abs" style="left:204px;top:6px;font-family:'Liberation Sans';font-size:13px;line-height:17px;color:#e4e4e4;white-space:pre;letter-spacing:-0.242px;">Desktop</span>
<span class="abs" style="left:289.6px;top:6px;font-family:'Liberation Sans';font-size:13px;line-height:17px;color:#e4e4e4;white-space:pre;letter-spacing:-0.459px;">test.R</span>
<svg class="abs" style="left:0;top:0" width="342" height="25"><path d="M80.5 9.5 L85.5 14.5 L80.5 19.5 M128 9.5 L133 14.5 L128 19.5 M193.5 9.5 L198.5 14.5 L193.5 19.5 M256.5 9.5 L261.5 14.5 L256.5 19.5 " stroke="#ddd" stroke-width="1.1" fill="none"/><ellipse cx="276.4" cy="14" rx="4.2" ry="2.9" fill="none" stroke="#519aba" stroke-width="1.7"/><path d="M275.6 12.4 H279.4 C281 12.4 281 15.2 279.6 15.4 L281.4 18.6 H279.6 L278 15.6 H277.2 V18.6 H275.6 Z" fill="#519aba" stroke="#000" stroke-width="0.5"/></svg>
<div class="ln" style="top:26px;color:#fff">1</div>
<div class="vc" style="top:26px"><span class="f">data.frame</span><span class="b1">(</span></div>
<div class="ln" style="top:45px;color:#fff">2</div>
<div class="vc" style="top:45px">    <span class="v">x</span> = <span class="n">1</span>:<span class="n">10</span>,</div>
<div class="ln" style="top:64px;color:#fff">3</div>
<div class="vc" style="top:64px">    <span class="v">y</span> = <span class="f">rnorm</span><span class="b2">(</span><span class="n">10</span><span class="b2">)</span></div>
<div class="ln" style="top:83px;color:#fff">4</div>
<div class="vc" style="top:83px"><span class="b1">)</span></div>
<div class="ln" style="top:102px;color:#fff">5</div>
<div class="ln" style="top:121px;color:#fff">6</div>
<div class="vc" style="top:121px"><span class="kw">list</span><span class="b1">(</span></div>
<div class="ln" style="top:140px;color:#fff">7</div>
<div class="vc" style="top:140px">    <span class="f">data.frame</span><span class="b2">(</span></div>
<div class="ln" style="top:159px;color:#ffa500">8</div>
<div class="vc" style="top:159px">        <span class="v">x</span> = <span class="n">1</span>:<span class="n">10</span>,</div>
<div class="ln" style="top:178px;color:#fff">9</div>
<div class="vc" style="top:178px">        <span class="v">y</span> = <span class="f">rnorm</span><span class="b3">(</span><span class="n">10</span><span class="b3">)</span></div>
<div class="ln" style="top:197px;color:#fff">10</div>
<div class="vc" style="top:197px">    <span class="b2">)</span>,</div>
<div class="ln" style="top:216px;color:#fff">11</div>
<div class="vc" style="top:216px">    <span class="f">data.frame</span><span class="b2">(</span></div>
<div class="ln" style="top:235px;color:#fff">12</div>
<div class="vc" style="top:235px">        <span class="v">x</span> = <span class="n">1</span>:<span class="n">10</span>,</div>
<div class="ln" style="top:254px;color:#fff">13</div>
<div class="vc" style="top:254px">        <span class="v">y</span> = <span class="f">rnorm</span><span class="b3">(</span><span class="n">10</span><span class="b3">)</span></div>
<div class="ln" style="top:273px;color:#fff">14</div>
<div class="vc" style="top:273px">    <span class="b2">)</span></div>
<div class="ln" style="top:292px;color:#fff">15</div>
<div class="vc" style="top:292px"><span class="b1">)</span></div>
<div class="ln" style="top:311px;color:#fff">16</div>
<div class="abs" style="left:116px;top:158px;width:226px;height:1px;background:#f38518"></div>
<div class="abs" style="left:116px;top:176px;width:226px;height:1px;background:#f38518"></div>
<div class="abs" style="left:116px;top:44px;width:1px;height:38px;background:#fff"></div>
<div class="abs" style="left:116px;top:139px;width:1px;height:152px;background:#fff"></div>
<div class="abs" style="left:147px;top:158px;width:1px;height:38px;background:#fff"></div>
<div class="abs" style="left:147px;top:234px;width:1px;height:38px;background:#fff"></div>
<div class="abs" style="left:246px;top:159px;width:2px;height:17px;background:#fff"></div>
<div class="abs" style="left:224px;top:139px;width:8px;height:18px;border:1px solid #6fc3df"></div>
<div class="abs" style="left:147px;top:196px;width:8px;height:18px;border:1px solid #6fc3df"></div>
<div class="abs" style="left:52px;top:126px;width:8px;height:8px;border-radius:4px;background:#5e0c06"></div>
<svg class="abs" style="left:99px;top:123px" width="12" height="12"><path d="M1.2 4.8 L6.1 9.7 L11 4.8" stroke="#fff" stroke-width="1.2" fill="none"/></svg>
</div>
</body></html>
